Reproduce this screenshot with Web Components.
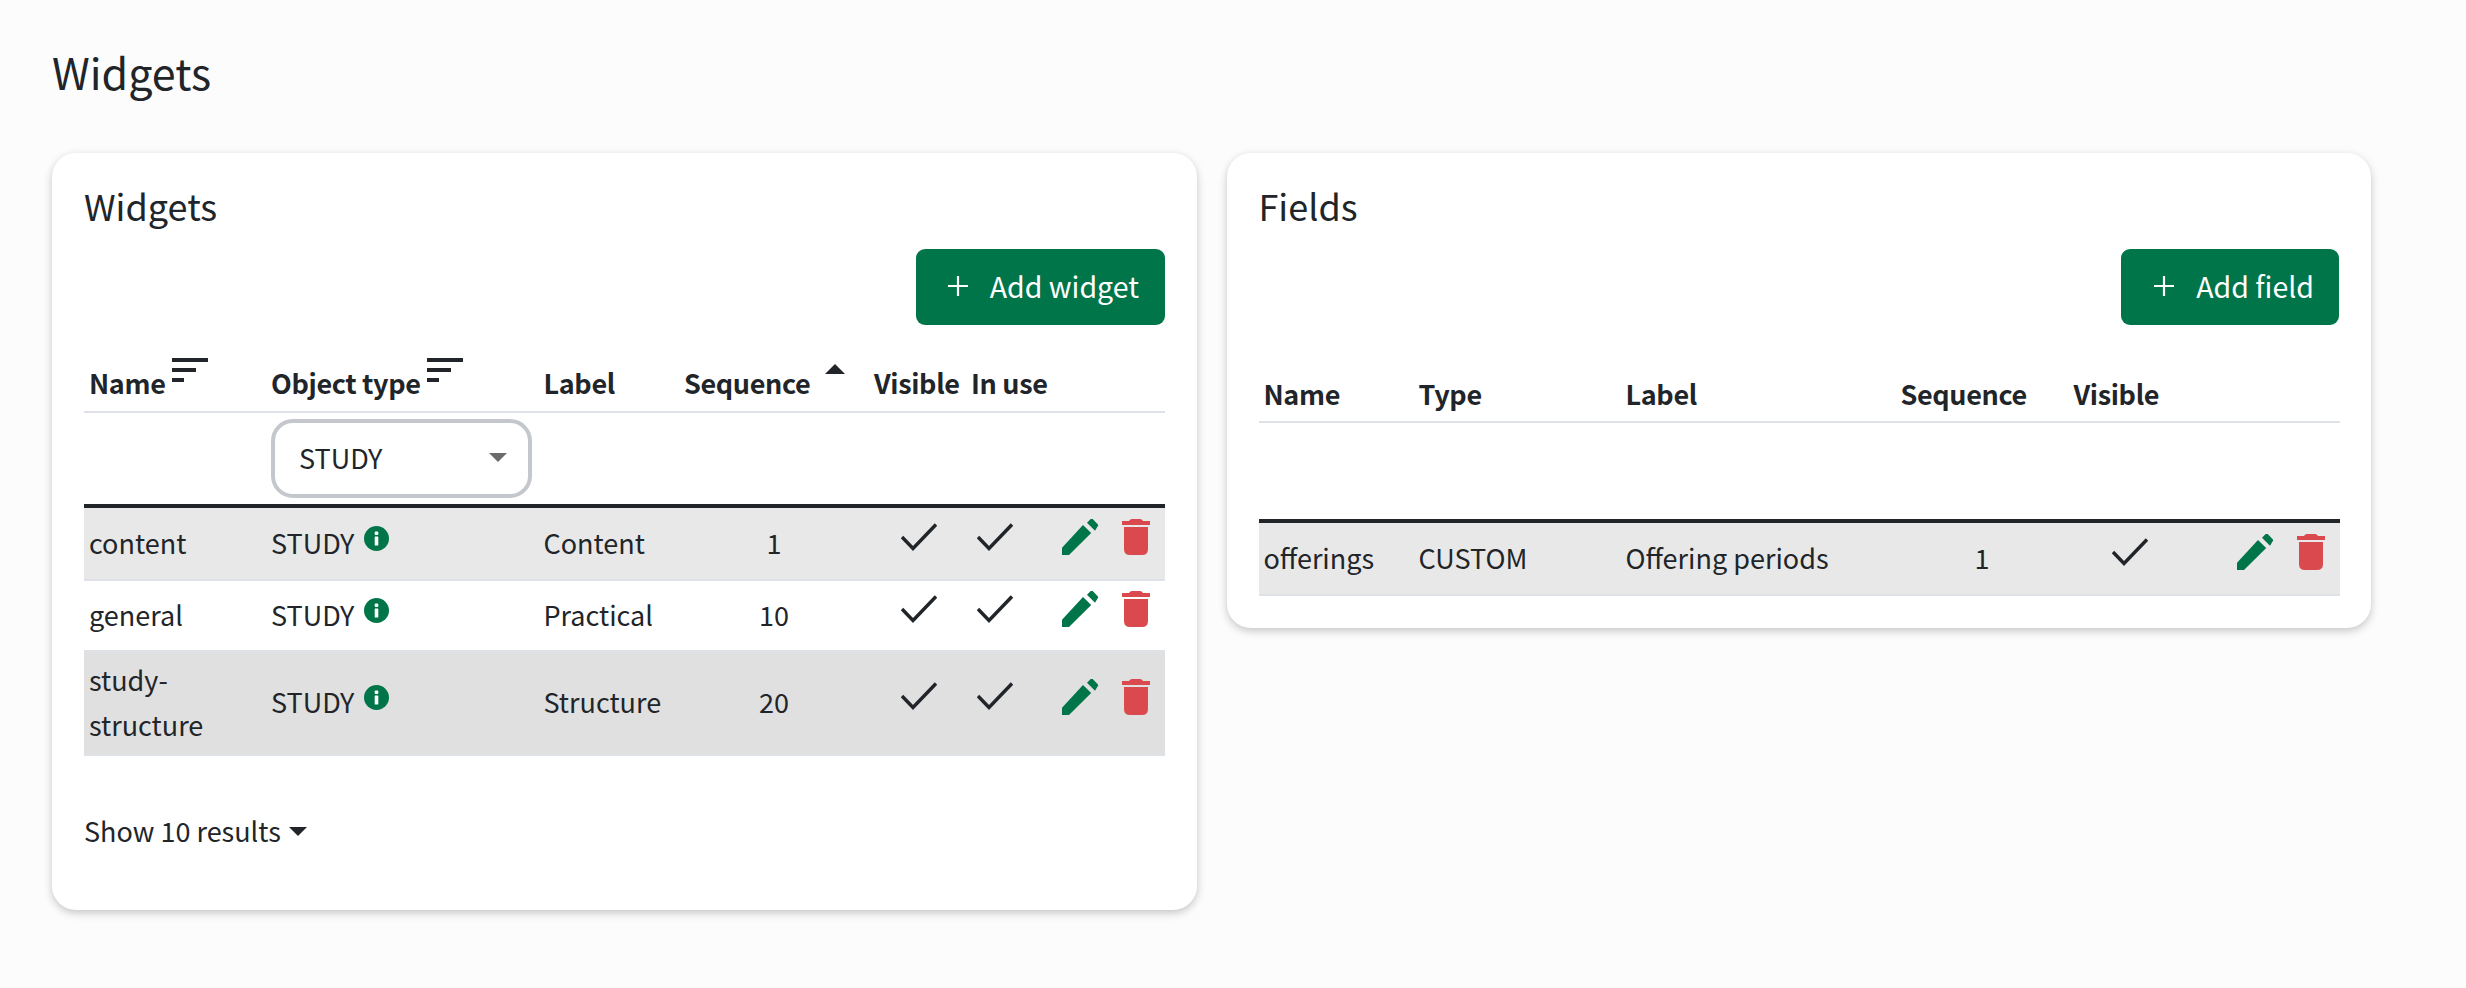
<!DOCTYPE html>
<html lang="en"><head><meta charset="utf-8"><title>Widgets</title>
<style>
html,body{margin:0;padding:0;background:#fcfcfc;}
body{font-family:"Noto Sans CJK SC","Source Sans 3","Noto Sans",sans-serif;color:#212529;font-size:27px;line-height:42px;min-height:988px;}
</style></head><body>
<x-page heading="Widgets">
  <x-card heading="Widgets">
    <x-button slot="action" label="Add widget" style="--pl:32px;--pr:25.5px"></x-button>
    <x-table id="w"></x-table>
    <x-results slot="foot">Show 10 results</x-results>
  </x-card>
  <x-card heading="Fields">
    <x-button slot="action" label="Add field" style="--pl:33px;--pr:25px"></x-button>
    <x-table id="f"></x-table>
  </x-card>
</x-page>
<script>
const ICONS={
 pencil:'<svg width="37" height="36" viewBox="0 0 37 36"><path d="M0 36V28.7L21 6l8.2 8L7 36z" fill="#00754a"/><path d="M25 3.7 28.7 0a1.5 1.5 0 0 1 2 0l5 5.2a1.5 1.5 0 0 1 0 2L33 11.7z" fill="#00754a"/></svg>',
 trash:'<svg width="28" height="36" viewBox="0 0 28 36"><path d="M7 2Q8 0 10 0h8q2 0 3 2h7v4H0V2z" fill="#da494e"/><path d="M2 8h24v22q0 6-6 6H8q-6 0-6-6z" fill="#da494e"/></svg>',
 check:'<svg width="36" height="28" viewBox="0 0 36 28"><path d="M1 14 12 25.5 35 1.5" fill="none" stroke="#212529" stroke-width="3.4"/></svg>',
 info:'<svg width="25" height="25" viewBox="0 0 25 25"><circle cx="12.5" cy="12.5" r="12.5" fill="#00754a"/><rect x="10.7" y="5.5" width="3.6" height="3.4" rx="1" fill="#fff"/><rect x="10.7" y="10.5" width="3.6" height="9" rx=".6" fill="#fff"/></svg>',
 sort:'<svg width="36" height="24" viewBox="0 0 36 24"><rect width="36" height="4" fill="#212529"/><rect y="10" width="24" height="4" fill="#212529"/><rect y="20" width="12" height="4" fill="#212529"/></svg>',
 up:'<svg width="20" height="10" viewBox="0 0 20 10"><path d="M10 0 20 10H0z" fill="#212529"/></svg>',
 plus:'<svg width="20" height="20" viewBox="0 0 20 20"><path d="M10 0V20M0 10H20" stroke="#fff" stroke-width="2.2" fill="none"/></svg>',
 down:'<svg width="18" height="9" viewBox="0 0 18 9"><path d="M0 0H18L9 9z" fill="currentColor"/></svg>'
};
class XIcon extends HTMLElement{
 constructor(){super();this.attachShadow({mode:'open'});}
 connectedCallback(){this.shadowRoot.innerHTML='<style>:host{display:inline-block;line-height:0}svg{display:block}</style>'+ICONS[this.getAttribute('name')];}
}
customElements.define('x-icon',XIcon);

class XPage extends HTMLElement{
 constructor(){super();this.attachShadow({mode:'open'});}
 connectedCallback(){this.shadowRoot.innerHTML=`<style>
 :host{display:block;padding:38px 95px 0 52px}
 h1{margin:0 0 45px;font-size:43px;line-height:66px;font-weight:400;height:70px}
 .row{display:flex;gap:30px;align-items:flex-start}
 ::slotted(x-card){flex:1 1 0;min-width:0}
 </style><h1>${this.getAttribute('heading')}</h1><div class="row"><slot></slot></div>`;}
}
customElements.define('x-page',XPage);

class XCard extends HTMLElement{
 constructor(){super();this.attachShadow({mode:'open'});}
 connectedCallback(){this.shadowRoot.innerHTML=`<style>
 :host{display:block;background:#fff;border-radius:24px;padding:29px 32px 32px;box-shadow:0 3px 8px rgba(0,0,0,.22);box-sizing:border-box}
 h3{margin:0;font-size:36px;line-height:46px;font-weight:400}
 .act{display:flex;justify-content:flex-end;margin-top:21px}
 .foot{display:block}
 </style><h3>${this.getAttribute('heading')}</h3><div class="act"><slot name="action"></slot></div><slot></slot><div class="foot"><slot name="foot"></slot></div>`;}
}
customElements.define('x-card',XCard);

class XButton extends HTMLElement{
 constructor(){super();this.attachShadow({mode:'open'});}
 connectedCallback(){this.shadowRoot.innerHTML=`<style>
 :host{display:inline-flex;align-items:center;height:76px;box-sizing:border-box;background:#00754a;color:#fff;border-radius:9px;padding:0 var(--pr) 2px var(--pl);font-size:28.5px;font-weight:400}
 span{margin-left:22px}
 </style><x-icon name="plus"></x-icon><span>${this.getAttribute('label')}</span>`;}
}
customElements.define('x-button',XButton);

class XSelect extends HTMLElement{
 constructor(){super();this.attachShadow({mode:'open'});}
 connectedCallback(){this.shadowRoot.innerHTML=`<style>
 :host{display:flex;align-items:center;justify-content:space-between;width:261px;height:79px;box-sizing:border-box;border:4px solid #c4c8cd;border-radius:22px;padding:0 21px 2px 24px;background:#fff;font-weight:400}
 x-icon{color:#6b6b6b}
 </style><span><slot></slot></span><x-icon name="down"></x-icon>`;}
}
customElements.define('x-select',XSelect);

class XResults extends HTMLElement{
 constructor(){super();this.attachShadow({mode:'open'});}
 connectedCallback(){this.shadowRoot.innerHTML=`<style>
 :host{display:flex;align-items:center;gap:8px;margin:54px 0 26px;height:42px}
 x-icon{color:#212529}
 </style><slot></slot><x-icon name="down"></x-icon>`;}
}
customElements.define('x-results',XResults);

class XTable extends HTMLElement{
 constructor(){super();this.attachShadow({mode:'open'});}
 set config(c){
  const col=c.cols.map(w=>`<col style="width:${w}px">`).join('');
  const head=c.head.map(h=>`<th>${h.t||''}${h.icon==='sort'?'<x-icon class="so" name="sort"></x-icon>':''}${h.icon==='up'?'<x-icon class="upi" name="up"></x-icon>':''}</th>`).join('');
  const filt=c.head.map(h=>`<td>${h.filter?`<x-select>${h.filter}</x-select>`:''}</td>`).join('');
  const rows=c.rows.map(r=>`<tr class="${r.cls}" style="height:${r.h}px">`+r.cells.map(x=>{
    if(x==='check')return `<td class="ic chk"><x-icon name="check" style="margin-left:${r.ml.shift()}px"></x-icon></td>`;
    if(x==='acts')return `<td class="ic"><div class="acts"><x-icon name="pencil"></x-icon><x-icon name="trash"></x-icon></div></td>`;
    if(x.info)return `<td>${x.info}<x-icon class="inf" name="info"></x-icon></td>`;
    if(x.c)return `<td class="ctr">${x.c}</td>`;
    return `<td>${x}</td>`;
  }).join('')+'</tr>').join('');
  this.shadowRoot.innerHTML=`<style>
  :host{display:block;margin-top:${c.top}px}
  table{width:100%;table-layout:fixed;border-collapse:separate;border-spacing:0}
  th{font-weight:600;text-align:left;padding:0 5px ${c.pb}px;height:${c.hh}px;box-sizing:border-box;vertical-align:bottom;border-bottom:2px solid #dee2e6;white-space:nowrap;letter-spacing:-.35px}
  .filter td{height:${c.fh}px;box-sizing:border-box;padding:0 5px;border-bottom:4px solid #212529;vertical-align:middle}
  tbody td{padding:0 5px 3px;border-bottom:2px solid #dee2e6;vertical-align:middle;box-sizing:border-box;line-height:45px}
  .a td{background:#e8e8e8}.b td{background:#fff}.c td{background:#e0e0e0}
  td.ctr{text-align:center}
  tbody td.ic{padding-bottom:13px}
  tbody td.chk{padding-bottom:9px}
  .acts{display:flex;gap:23px;justify-content:flex-end;padding-right:10px}
  .inf{margin-left:10px;vertical-align:3px}
  .so{vertical-align:12px;margin-left:6px}
  .upi{vertical-align:20px;margin-left:15px}
  </style><table><colgroup>${col}</colgroup><thead><tr>${head}</tr><tr class="filter">${filt}</tr></thead><tbody>${rows}</tbody></table>`;
 }
}
customElements.define('x-table',XTable);

const rw=(cls,h,name,label,seq)=>({cls,h,ml:[27,6],cells:[name,{info:'STUDY'},label,{c:seq},'check','check','acts']});
document.getElementById('w').config={top:15,hh:73,pb:7,fh:95,
 cols:[182,272.5,140.5,190,97,89,110],
 head:[{t:'Name',icon:'sort'},{t:'Object type',icon:'sort',filter:'STUDY'},{t:'Label'},{t:'Sequence',icon:'up'},{t:'Visible'},{t:'In use'},{}],
 rows:[rw('a',73,'content','Content','1'),rw('b',71,'general','Practical','10'),rw('c',104,'study-<br>structure','Structure','20')]};
document.getElementById('f').config={top:15,hh:83,pb:6,fh:100,
 cols:[155,207,275,173,155,116],
 head:[{t:'Name'},{t:'Type'},{t:'Label'},{t:'Sequence'},{t:'Visible'},{}],
 rows:[{cls:'a',h:73,ml:[38],cells:['offerings','CUSTOM','Offering periods',{c:'1'},'check','acts']}]};
</script></body></html>
